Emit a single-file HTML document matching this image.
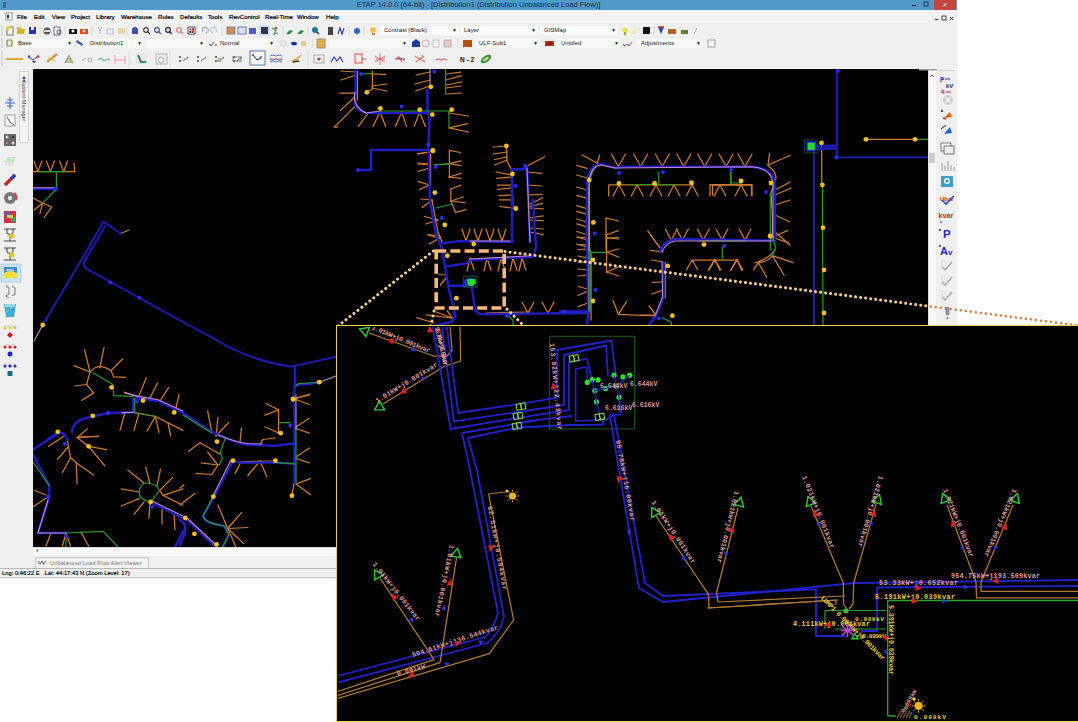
<!DOCTYPE html>
<html><head><meta charset="utf-8">
<style>
*{margin:0;padding:0;box-sizing:border-box}
html,body{width:1078px;height:722px;overflow:hidden;background:#fff;font-family:"Liberation Sans",sans-serif}
.a{position:absolute}
#win{left:0;top:0;width:957px;height:579px;background:#f0f0f0}
#title{left:0;top:0;width:957px;height:10px;background:#4f99cb}
#ttext{left:0;top:0;width:957px;text-align:center;font-size:7.5px;line-height:10px;color:#1c2c3c}
#menu{left:0;top:10px;width:957px;height:13px;font-size:6.1px;line-height:14px;color:#000;background:#f3f3f3;-webkit-text-stroke:0.2px #000}
#menu span{position:absolute;top:0}
.cb{position:absolute;height:9px;background:#fafafa;font-size:6px;line-height:9px;color:#1a1a1a;padding-left:4px}
.cb i{position:absolute;right:2px;top:0;font-style:normal;font-size:5px}
#canvas{left:33px;top:69px;width:895px;height:478px;background:#000}
#vscroll{left:928px;top:69px;width:8px;height:478px;background:#f8f8f8;border-left:1px solid #e4e4e4}
#rtb{left:936px;top:69px;width:21px;height:478px;background:#f0f0f0}
#hscroll{left:33px;top:547px;width:895px;height:9px;background:#f8f8f8;border-top:1px solid #dcdcdc;font-size:6px;line-height:8px;padding-left:2px;color:#333}
#tab{left:35px;top:557px;width:114px;height:11px;border:1px solid #c8c8c8;border-bottom:none;background:#f2f2f2;font-size:5.8px;line-height:10px;color:#7a7a7a;padding-left:14px}
#status{left:0;top:568px;width:957px;height:10px;background:#f0f0f0;border-top:1px solid #b8b8b8;border-bottom:1px solid #c8c8c8;font-size:5.8px;line-height:9px;padding-left:2px;color:#000;-webkit-text-stroke:0.15px #000}
#ltb{left:0;top:69px;width:33px;height:478px;background:#f0f0f0}
#smtab{left:19px;top:71px;width:10px;height:72px;background:#f4f4f4;border:1px solid #d0d0d0}
#smtext{left:24px;top:72px;width:70px;height:8px;font-size:5.5px;line-height:8px;color:#444;transform-origin:0 0;transform:rotate(90deg) translate(8px,-4px);white-space:nowrap}
#inset{left:336px;top:325px;width:742px;height:397px;background:#000;border:1.5px solid #ecd84a;border-right:none}
</style></head><body>
<div id="win" class="a"></div>
<div id="title" class="a"></div>
<div id="ttext" class="a">ETAP 14.0.0 (64-bit) - [Distribution1 (Distribution Unbalanced Load Flow)]</div>
<div class="a" style="left:934px;top:0;width:22px;height:10px;background:#c7473e"></div>
<div id="menu" class="a">
<span style="left:17px">File</span><span style="left:34px">Edit</span><span style="left:52px">View</span><span style="left:71px">Project</span><span style="left:96px">Library</span><span style="left:121px">Warehouse</span><span style="left:158px">Rules</span><span style="left:180px">Defaults</span><span style="left:208px">Tools</span><span style="left:229px">RevControl</span><span style="left:265px">Real-Time</span><span style="left:297px">Window</span><span style="left:326px">Help</span>
</div>
<div class="cb" style="left:14px;top:39px;width:60px">Base<i>&#9660;</i></div>
<div class="cb" style="left:86px;top:39px;width:58px">Distribution1<i>&#9660;</i></div>
<div class="cb" style="left:146px;top:39px;width:60px"><i>&#9660;</i></div>
<div class="cb" style="left:216px;top:39px;width:60px">Normal<i>&#9660;</i></div>
<div class="cb" style="left:329px;top:39px;width:80px"><i>&#9660;</i></div>
<div class="cb" style="left:475px;top:39px;width:65px">ULF-Sub1<i>&#9660;</i></div>
<div class="cb" style="left:557px;top:39px;width:64px">Untitled<i>&#9660;</i></div>
<div class="cb" style="left:637px;top:39px;width:66px">Adjustments<i>&#9660;</i></div>
<div class="cb" style="left:380px;top:26px;width:79px">Contrast (Black)<i>&#9660;</i></div>
<div class="cb" style="left:460px;top:26px;width:78px">Layer<i>&#9660;</i></div>
<div class="cb" style="left:540px;top:26px;width:78px">GISMap<i>&#9660;</i></div>
<div id="ltb" class="a"></div>
<div id="smtab" class="a"></div>
<div id="smtext" class="a">System Manager</div>
<div id="canvas" class="a"></div>
<div id="vscroll" class="a"></div>
<div id="rtb" class="a"></div>
<div id="hscroll" class="a"><span style="font-size:8px;line-height:8px;position:absolute;left:3px;top:-1px;color:#222">&lsaquo;</span></div>
<div id="tab" class="a">Unbalanced Load Flow Alert Viewer</div>
<div id="status" class="a">Lng: 0:46:22 E &nbsp; Lat: 44:17:43 N (Zoom Level: 17)</div>
<svg class="a" style="left:0;top:0" width="1078" height="722" viewBox="0 0 1078 722">
<defs><clipPath id="cv"><rect x="33" y="69" width="895" height="478"/></clipPath></defs>
<g clip-path="url(#cv)" fill="none" stroke-linecap="round" stroke-linejoin="round">
<g stroke="#cc7c30" stroke-width="1.25"><path d="M372.4 71 L372.4 89 L367 92"/><path d="M372 74 L385.6 74.3"/><path d="M372 86 L387 84"/><path d="M372 88 L387 91"/><path d="M356 72 L341 71"/><path d="M356 75 L341 80"/><path d="M356 93 L339.7 93"/><path d="M356 96 L340.4 110.4"/><path d="M355.7 105.6 L334.2 127.1 L337.5 127.1"/><path d="M367.6 114 L358.5 126.4"/><path d="M380 112 L373 126.4"/><path d="M380 112 L385.7 126.4"/><path d="M401.7 112 L395.4 126.4"/><path d="M401.7 112 L406.5 126.4"/><path d="M419.7 112 L414.2 126.4"/><path d="M419.7 112 L425.3 126.4"/><path d="M430 72 L416 75"/><path d="M430 80 L415 84"/><path d="M430 86 L415.6 91"/><path d="M446 74 L460.8 72.2"/><path d="M446 80 L461.5 75.6"/><path d="M446 85 L461.5 82"/><path d="M446 88 L460.8 86"/><path d="M446 94 L461.5 93"/><path d="M449 113 L468.4 116"/><path d="M449 127.8 L467.7 123.7"/><path d="M449 127.8 L468.4 132"/><path d="M430 152 L417.7 153.6"/><path d="M430 165 L417.7 164"/><path d="M430.6 154 L430.6 185"/><path d="M449.4 150.4 L449.4 177"/><path d="M449.4 150.4 L460.5 152.5"/><path d="M449 163.7 L461 160.9"/><path d="M449 163.7 L461 165.7"/><path d="M449 177 L461 173.4"/><path d="M449 177 L461 178.3"/><path d="M450.8 188.7 L450.8 201.2 L455.7 212.4"/><path d="M451 189 L461 185.2"/><path d="M451 201 L463.3 197"/><path d="M451 201 L464.7 202.6"/><path d="M455.7 212.4 L466 209.6"/><path d="M430 152 L418 154"/><path d="M430 164 L418 163"/><path d="M430 168 L418 171.3"/><path d="M430 185 L418 181.7"/><path d="M430 185 L419.5 189.4"/><path d="M432 200 L420.9 199"/><path d="M432 200 L422.3 207.5"/><path d="M438 220 L424.3 216.5"/><path d="M438 220 L425.7 224"/><path d="M440 236 L427.8 234.6"/><path d="M466 241 L462 229 M466 241 L470 229"/><path d="M478 241 L474 229 M478 241 L482 229"/><path d="M490 241 L486 229 M490 241 L494 229"/><path d="M502 241 L498 229 M502 241 L506 229"/><path d="M506.4 145.8 L507 161 L511.3 169.2"/><path d="M512 175 L513 208"/><path d="M507 146 L493 147"/><path d="M507 152 L493 154"/><path d="M507 157 L494.6 159.5"/><path d="M507 160 L494.6 165"/><path d="M512 175 L496 172"/><path d="M512 177 L496.7 178.3"/><path d="M512 185 L497.4 185.2"/><path d="M512 188 L498 189.4"/><path d="M512 195 L498.8 195.7"/><path d="M512 200 L499.5 199.8"/><path d="M512 208 L500.2 206.5"/><path d="M527 166 L544.7 156.7"/><path d="M527 172 L541.9 173.4"/><path d="M527 185 L541.9 186"/><path d="M527 195 L541.9 194.3"/><path d="M528 205 L542.6 197.7"/><path d="M528 207 L542.6 203.3"/><path d="M529 208 L543.3 208.9"/><path d="M529 218 L543.3 215.8"/><path d="M529 220 L543.3 220.7"/><path d="M530 228 L543.3 229"/><path d="M530 232 L543.3 234.6"/><path d="M582 155 L599 164 M599.7 155 L597 164"/><path d="M618.4 166.5 L611.4 154 M618.4 166.5 L625.4 154"/><path d="M640.7 166.5 L633.7 154 M640.7 166.5 L647.7 154"/><path d="M662.3 166.5 L655.3 154 M662.3 166.5 L669.3 154"/><path d="M683.8 166.5 L676.8 154 M683.8 166.5 L690.8 154"/><path d="M704.7 166.5 L697.7 154 M704.7 166.5 L711.7 154"/><path d="M726 166.5 L719 154 M726 166.5 L733 154"/><path d="M745 166.5 L738 154 M745 166.5 L752 154"/><path d="M608.7 196 L608.7 184.8 L693 184.8"/><path d="M710 184.5 L752 184.5 M710 184.5 L710 196 M752 184.5 L752 196"/><path d="M619 184.8 L613 196 M619 184.8 L625 196"/><path d="M637.2 184.8 L631.2 196 M637.2 184.8 L643.2 196"/><path d="M656 184.8 L650 196 M656 184.8 L662 196"/><path d="M674 184.8 L668 196 M674 184.8 L680 196"/><path d="M692.2 184.8 L686.2 196 M692.2 184.8 L698.2 196"/><path d="M720 184.8 L714 196 M720 184.8 L726 196"/><path d="M741 184.8 L735 196 M741 184.8 L747 196"/><path d="M587 168.4 L576.7 165.4"/><path d="M587 178 L576.7 175"/><path d="M587 190 L576.7 187"/><path d="M587 198.3 L576.7 195.3"/><path d="M587 208.7 L576.7 205.7"/><path d="M587 214.3 L576.7 211.3"/><path d="M587 222 L576.7 219"/><path d="M587 226.8 L576.7 223.8"/><path d="M587 234.5 L576.7 231.5"/><path d="M587 240 L576.7 237"/><path d="M587 247 L576.7 244"/><path d="M606 218.2 L606 250"/><path d="M606 218 L618.4 221"/><path d="M606 235 L618.4 230.7"/><path d="M606 238 L618.4 237.7"/><path d="M671.3 240 L665.3 229 M671.3 240 L677.3 229"/><path d="M682.4 240 L676.4 229 M682.4 240 L688.4 229"/><path d="M703.3 240 L697.3 229 M703.3 240 L709.3 229"/><path d="M722 240 L716 229 M722 240 L728 229"/><path d="M745 240 L739 229 M745 240 L751 229"/><path d="M660 248 L647.7 230.7"/><path d="M775 190 L790 182"/><path d="M775 205 L790 200"/><path d="M775 215 L790 222"/><path d="M775 232 L790 245"/><path d="M775 195 L791 188"/><path d="M712.5 195 L712.5 185.2 L751.5 185.2 L751.5 195"/><path d="M768 165.7 Q777 172 775.8 179 L771 193 L772.4 215 L772.4 240"/><path d="M768 165 L769.6 153.2"/><path d="M768 165 L790.4 155.3"/><path d="M821.7 142.8 L821.7 184.5"/><path d="M866 139.3 L915 139.3"/><path d="M606.6 235 L606.6 272.6"/><path d="M606.6 238 L619 239"/><path d="M606.6 252 L619 249"/><path d="M606.6 252 L619 257.3"/><path d="M606.6 272 L618.4 267"/><path d="M606.6 272 L619 276"/><path d="M588 238 L578 237"/><path d="M588 245 L578 244.7"/><path d="M588 249 L578 249.6"/><path d="M588 258 L578 256"/><path d="M588 262 L578 262"/><path d="M588 270 L578 269"/><path d="M588 275 L578 276"/><path d="M588 289 L578 286.5"/><path d="M588 291 L578 295.5"/><path d="M588 303 L578 306.7"/><path d="M656 316 L618.4 314.3 L613 300.4 M618.4 314.3 L626.8 301"/><path d="M663 252 L650.4 250.3"/><path d="M663 262 L651.8 260"/><path d="M663 282 L652.5 282.3"/><path d="M663 290 L651.8 294"/><path d="M656 315 L649 306"/><path d="M656 315 L640 315"/><path d="M660 248 L650.4 235"/><path d="M692.2 260 L737 260 M692.2 260 L686.6 269.8 M692.2 260 L697.7 269.8 M715 260 L709 270 M715 260 L721 270 M737 260 L731 270 M737 260 L743 270"/><path d="M755 263 Q770 258 775 250"/><path d="M714.6 259.2 L708.3 270.4 M714.6 259.2 L720 270.4 M737 259.2 L730.6 270.4 M737 259.2 L741.7 270.4"/><path d="M772.4 255.7 Q768 262 758.4 262.7 M772.4 255.7 L793.2 262.7 M772.4 255.7 L784.2 275.2 M758.4 262.7 L753.6 269.7 M758.4 262.7 L766.8 277.3 M772 237 L787.7 230.7 M772 237 L789 243.2"/><path d="M33 171.6 L74.7 171.6 L74 163.2"/><path d="M37.9 171.6 L33.9 161 M37.9 171.6 L41.9 161"/><path d="M50.4 171.6 L46.4 161 M50.4 171.6 L54.4 161"/><path d="M63.6 171.6 L59.6 161 M63.6 171.6 L67.6 161"/><path d="M42.7 203 L33 198 M42.7 203 L34.4 209.8 M42.7 203 L40 213.3 M42.7 203 L51.8 207 L44.1 217.5"/><path d="M120.7 233.5 L129 230"/><path d="M293 399 L310 394"/><path d="M90 372 Q98 362 111 370.6 L113.7 376.9 L125.5 377.3"/><path d="M90 372 L84.5 349.7"/><path d="M99.8 367.8 L104 347.7"/><path d="M111 370.6 L122.7 358.8"/><path d="M90 372 L74 365.7"/><path d="M90 372 L86.6 384.5 L74.7 386"/><path d="M86.6 384.5 L93.5 392.9 L81.7 400.5"/><path d="M133 412.4 L155.4 416.5 L183 430.4"/><path d="M124.8 413 L120 430.4"/><path d="M138.7 414 L134 430.4"/><path d="M155.4 416.5 L147 431"/><path d="M155.4 416.5 L159 432.5"/><path d="M168 423 L170.7 436"/><path d="M138.7 396.4 L146.4 377.6"/><path d="M150 398 L157.5 383"/><path d="M160 401 L168.7 387.3"/><path d="M176 408 L179 394.3"/><path d="M124 392 L138 397"/><path d="M77.5 437.4 L87.3 429 M77.5 437.4 L98.4 436"/><path d="M67.3 439.8 L70.6 457.8 L76.3 462.7 L93.5 475"/><path d="M70.6 457.8 L62.4 472.5"/><path d="M76.3 462.7 L77 484"/><path d="M69 446 L57.5 459.4"/><path d="M65.7 435 L48.5 446.3"/><path d="M77 437.4 L88.6 446.3 L104.9 466 M77 437.4 L98.4 436.5 M88.6 446.3 L106.5 449.6"/><path d="M139 492 L121.2 488.8"/><path d="M139.2 498.6 L121.2 506"/><path d="M144 502 L134.3 514"/><path d="M150 502 L149 518.2"/><path d="M144 483 L127.8 470"/><path d="M150 484 L145.7 466.8"/><path d="M157 486 L160.5 469.2"/><path d="M159.6 490.5 L172.7 477.4"/><path d="M159.6 490.5 L163 495.4 L183 505.2"/><path d="M163 495.4 L183 488.8"/><path d="M162 508 L162 524"/><path d="M174 513.5 L175 529.7"/><path d="M47.7 497 L33 506.8"/><path d="M46 495 L34.6 490.5"/><path d="M51 533 L46 546"/><path d="M66 533 L62.4 546"/><path d="M66 533 L70.6 546"/><path d="M81 532 L88.6 546"/><path d="M242 461.5 L275.4 461"/><path d="M278.6 409.8 L278.6 433.2 M278.6 409.8 L265.8 403.5 M278.6 409.8 L264.8 415.1 M278.6 433 L264.8 426.8"/><path d="M294.5 399 L309.3 395"/><path d="M294.5 399 L309.3 404.5"/><path d="M294.5 428 L309.3 418.3"/><path d="M294.5 428 L309.3 433.2"/><path d="M294.5 458 L309.3 448"/><path d="M294.5 458 L309.3 462.8"/><path d="M296 484 L310.4 478.7"/><path d="M296 484 L310.4 494.6"/><path d="M294 483 L291.9 495.7"/><path d="M211.8 432 L207.6 410.9"/><path d="M216 436 L218 417.3"/><path d="M216 436 L228.7 422.6"/><path d="M240 442 L241.5 427.9"/><path d="M260 445 L262.7 439.5 L275 438"/><path d="M200 442.7 L188.5 451.2"/><path d="M200 442.7 L220.3 454.3"/><path d="M218 465 L207.6 452.2"/><path d="M218 465 L201.2 462.8"/><path d="M218 465 L211.8 474.5 L195.9 473.4"/><path d="M241 462 L235.1 473.4"/><path d="M260 461 L247.8 475.5"/><path d="M260 461 L266.9 476.6"/><path d="M227.7 528.5 L218 505.2"/><path d="M227.7 528.5 L241.5 512.6"/><path d="M227.7 528.5 L247.8 527.5"/><path d="M227.7 528.5 L243.6 543.4"/><path d="M227.7 528.5 L236 547"/><path d="M180 505 L194.8 493.6"/><path d="M180 488 L184 485"/><path d="M440 238 L427.8 234.9"/><path d="M440 238 L429.2 244"/><path d="M446 275 L439 274.5"/><path d="M446 278 L440.4 285"/><path d="M452 318 L436.2 312"/><path d="M452 318 L447.3 310.7"/><path d="M452 318 L426.4 314.9"/><path d="M434 323 L416.7 317.7"/><path d="M470 258 L467 271 M470 258 L474 270"/><path d="M487 258 L484 271 M487 258 L491 270"/><path d="M501 258 L498 271 M501 258 L505 270"/><path d="M513 258 L510 271 M513 258 L517 270"/><path d="M522 258 L519 271 M522 258 L526 270"/><path d="M528 313 L522 302 M528 313 L534 302"/><path d="M548 313 L542 302 M548 313 L554 302"/><path d="M486 313 L530 312"/><path d="M357.5 71 L357.5 100"/><path d="M591 252 L591 320"/><path d="M599 164 Q590 168 589.5 182 L589.5 250"/><path d="M432 200 L438 232 L442 242"/></g>
<g stroke="#1e1ec4" stroke-width="2.4"><path d="M355.7 69 L355.7 94 Q353 104 358 109 Q362 113 370 113 L429 113"/><path d="M427.4 90 L427.4 111 L429.5 120 L428.5 145 L430 200 L436 235 L440 243"/><path d="M371 170 L371 150 L429 150"/><path d="M371 170 L358 170"/><path d="M512 169 L512 242"/><path d="M512 169.2 L525.2 169.2 L526.6 166"/><path d="M527 166 L530 242"/><path d="M587 250 L587 184 Q588 166 601 164 L615.7 168 L621.2 166.7 L752 166.7 Q772 168 775 182 L775 238"/><path d="M660 252 Q664 240 676 239 L775 240.6"/><path d="M816 145.6 L836.4 145.6 M816 148.5 L836.4 148.5"/><path d="M587 250 L588.5 311.5 L587 326"/><path d="M560 311.5 L587 311.5"/><path d="M663.7 262.8 L663.7 297.6 L656 315.7 L649 325"/><path d="M33 188.7 L56.4 188.7"/><path d="M295 366.6 L295 386.8 Q296 384 303 384.5 L319 382.5"/><path d="M136 398 L158.2 401 L183 413"/><path d="M133.2 398.4 L133.2 412.4"/><path d="M72 432 Q72 420 92.8 416.5 L108 413 L133.2 412.4"/><path d="M46.9 440 L57.8 432.5 Q63 432 65 436 L67.8 440"/><path d="M33 449.6 L55.9 434.9"/><path d="M33 454.5 L49.3 485.6 L49.3 497 L37.9 533"/><path d="M37.9 533 L65.7 533"/><path d="M150.6 502 L183 518.2"/><path d="M183 531.3 L175.2 547"/><path d="M183 413 L211.8 432.1 L222.4 436.3 Q235 443 247.8 444.8 L275.4 445.9 L294.5 443.3"/><path d="M294.5 386 L294.5 483"/><path d="M233 460.7 L241.5 462.8 L275.4 462.4 L294.5 463.9"/><path d="M233 460.7 L214 496.7 L203.3 515.8 Q204 522 215 524 L224.5 526.4 L228.7 534.9 L222.4 548"/><path d="M185.3 518 L214 545.5"/><path d="M180 520 Q188 525 184 535 L180 545"/><path d="M440 243 L441.7 248 L446 271.7 L448.7 288.4 L452.9 305 L455.7 316.3 L451.5 321.8 L433.4 326"/><path d="M448.7 285.7 L466.8 285.7 L471 282.2"/><path d="M447.3 266.2 L466.8 263.4 L469.6 260 L533 256.8 L536 248 L533 200"/><path d="M443 243.2 L458.4 241.1 L513 242"/><path d="M472 288 L475 309.3 Q477 314 482 314.2 L589 313"/></g>
<g stroke="#1c1cb8" stroke-width="1.9"><path d="M814 152 L814 330"/><path d="M837 69 L837 157.4 L928 157.4"/><path d="M120.7 233.5 L103.3 221.7 L87.3 250 L42.7 325"/><path d="M105.3 225.8 L97 240 L84 262 Q83 267 88 269.5 L183 322 L212 337.5 Q250 361 291.6 366.6 L336 356.7"/></g>
<g stroke="#2a9a2a" stroke-width="1.2"><path d="M361 74 L372 73.6"/><path d="M381 111 L450 111"/><path d="M445.5 69 L445.5 94"/><path d="M449 111 L449 128"/><path d="M434.4 164.7 L449.7 164"/><path d="M436 165 L448.7 163.7"/><path d="M436 208 L452.9 204"/><path d="M589 250 L589 186 Q591 170 597 166"/><path d="M630 184.5 L677 184.5"/><path d="M658.8 172 L658.8 183.4"/><path d="M731 172 L731 184"/><path d="M770.3 193 L770.3 250"/><path d="M730.6 172 L730.6 183 L741.7 183"/><path d="M822.4 184.5 L823 330"/><path d="M915 139.3 L928 139.3"/><path d="M590.6 250 L590.6 311.5"/><path d="M590.6 252.4 L606 252.4"/><path d="M665.5 262 L665.5 298"/><path d="M662.3 317.8 L671.3 322 L671.3 326"/><path d="M700 241 L745 241"/><path d="M722.3 246.7 L722.3 259.2"/><path d="M772.4 237 L775.8 248 L772.4 255.7"/><path d="M40 171.6 L64 171.6 M56.4 171.6 L56.4 187.6 M56.4 189 L42.7 202.9"/><path d="M296 386 Q297 383 303 383.5 L319 382"/><path d="M92.8 372.7 L113 384.5 L113.7 395.7 L133.2 396.4"/><path d="M134.5 398.4 L134.5 412.4"/><path d="M134 412.5 L155 416"/><path d="M33 462 L49.3 485.6"/><path d="M65.7 533 L103.3 531.3 L118 547"/><path d="M150.6 502 Q139 500 139.2 492 Q140 483 147 483 Q157 484 159.6 490.5 L150.6 502"/><path d="M66 533 L66 547"/><path d="M183 415 L211.8 433"/><path d="M296 428.9 L296 483"/><path d="M275.4 462.4 L294.5 463.9"/><path d="M213 497 L203 516 Q205 523 224.5 526 L228.7 535 L222 548"/><path d="M279.6 422.6 L290.2 422.6"/><path d="M225.6 437.4 L220.3 452.2 L222.4 458.6 L219.2 465"/><path d="M508 316 L513 320 L513 326"/></g>
<g stroke="#c888c8" stroke-width="1.1"><path d="M355 92 Q352 106 366 113 L380 111"/><path d="M430 69 L430 87"/><path d="M527 168 L530 242"/><path d="M589 250 L589 184 Q590 166 601 165 L615 168 L752 166.7 Q770 168 773 182 L773 238"/><path d="M662 252 Q666 242 676 241 L772 241"/><path d="M589 250 L589 311"/><path d="M662 262 L662.5 297 L655 316"/><path d="M33 187.7 L54 187.7"/><path d="M42.7 325 L34 341"/><path d="M319 382.5 L336 376"/><path d="M124.8 392.9 L138.7 396.4 L158.2 399.8 L183 411"/><path d="M122 412.6 L133 412.4"/><path d="M48 500 L37.9 533 L65.7 533"/><path d="M152 501 L183 516"/><path d="M218 435 Q235 442 247.8 443.5 L262 444"/><path d="M296 395 L296 428.9"/><path d="M231 460 L213 496"/><path d="M187 518 L215 544"/><path d="M469.6 259 L530 255.8"/><path d="M470 241 L510 241"/></g>
<g fill="#2a2af0" stroke="none"><circle cx="361" cy="74" r="2"/><circle cx="434.4" cy="71.5" r="2"/><circle cx="401.7" cy="106.5" r="2"/><circle cx="428" cy="144.5" r="2"/><circle cx="358" cy="170" r="2"/><circle cx="435.5" cy="167" r="2"/><circle cx="441.7" cy="218" r="2"/><circle cx="525" cy="166" r="2"/><circle cx="515.5" cy="186" r="2"/><circle cx="619" cy="173" r="2"/><circle cx="663" cy="172.3" r="2"/><circle cx="594.8" cy="233.5" r="2"/><circle cx="731" cy="170" r="2"/><circle cx="766" cy="192" r="2"/><circle cx="838" cy="71" r="2"/><circle cx="836.4" cy="157.4" r="2"/><circle cx="564" cy="311.5" r="2"/><circle cx="595.5" cy="290" r="2"/><circle cx="658.8" cy="318.5" r="2"/><circle cx="724.3" cy="246" r="2"/><circle cx="56.4" cy="189" r="2"/><circle cx="110.2" cy="282.4" r="2"/><circle cx="139.4" cy="297.7" r="2"/><circle cx="108" cy="413" r="2"/><circle cx="136.7" cy="401.2" r="2"/><circle cx="47.7" cy="497" r="2"/><circle cx="66.5" cy="536.2" r="2"/><circle cx="64.9" cy="444" r="2"/><circle cx="152.3" cy="506.8" r="2"/><circle cx="290.2" cy="425.7" r="2"/><circle cx="507" cy="316" r="2"/></g>
<g fill="#f4c020" stroke="none"><circle cx="380.4" cy="108.4" r="2.4"/><circle cx="419.7" cy="109.7" r="2.4"/><circle cx="366.9" cy="92.3" r="2.4"/><circle cx="430.9" cy="86.8" r="2.4"/><circle cx="432.3" cy="114.6" r="2.4"/><circle cx="451.7" cy="109.7" r="2.4"/><circle cx="433" cy="150.8" r="2.4"/><circle cx="432.7" cy="150.4" r="2.4"/><circle cx="434.8" cy="192.6" r="2.4"/><circle cx="444.8" cy="224.9" r="2.4"/><circle cx="506.4" cy="145.8" r="2.4"/><circle cx="512.4" cy="174" r="2.4"/><circle cx="515.8" cy="208.5" r="2.4"/><circle cx="619" cy="183.4" r="2.4"/><circle cx="654.6" cy="183.4" r="2.4"/><circle cx="691.5" cy="182.7" r="2.4"/><circle cx="589.2" cy="180" r="2.4"/><circle cx="593.4" cy="222.4" r="2.4"/><circle cx="704" cy="244.6" r="2.4"/><circle cx="741" cy="181" r="2.4"/><circle cx="771" cy="183" r="2.4"/><circle cx="770" cy="236" r="2.4"/><circle cx="821.5" cy="142.8" r="2.4"/><circle cx="822.4" cy="184.8" r="2.4"/><circle cx="823" cy="227.7" r="2.4"/><circle cx="824" cy="270" r="2.4"/><circle cx="824" cy="313" r="2.4"/><circle cx="866" cy="139.3" r="2.4"/><circle cx="915" cy="139.3" r="2.4"/><circle cx="593" cy="259.8" r="2.4"/><circle cx="593" cy="301" r="2.4"/><circle cx="667.8" cy="265.9" r="2.4"/><circle cx="672.4" cy="315.7" r="2.4"/><circle cx="42.7" cy="325" r="2.4"/><circle cx="319.2" cy="382.2" r="2.4"/><circle cx="292.9" cy="399" r="2.4"/><circle cx="111.6" cy="387.3" r="2.4"/><circle cx="143" cy="400.5" r="2.4"/><circle cx="92.8" cy="415.8" r="2.4"/><circle cx="57.8" cy="431.8" r="2.4"/><circle cx="174.2" cy="412.4" r="2.4"/><circle cx="88.6" cy="446.3" r="2.4"/><circle cx="150.6" cy="502" r="2.4"/><circle cx="293.4" cy="399.2" r="2.4"/><circle cx="280.7" cy="433.2" r="2.4"/><circle cx="217" cy="441.6" r="2.4"/><circle cx="233" cy="460.7" r="2.4"/><circle cx="275.4" cy="460.7" r="2.4"/><circle cx="291.9" cy="495.7" r="2.4"/><circle cx="213.3" cy="496.7" r="2.4"/><circle cx="185.3" cy="518" r="2.4"/><circle cx="194.4" cy="533.8" r="2.4"/><circle cx="216.5" cy="544.4" r="2.4"/><circle cx="447.3" cy="255.7" r="2.4"/><circle cx="456.4" cy="298.2" r="2.4"/><circle cx="473.7" cy="244" r="2.4"/></g>
<rect x="804.8" y="139.8" width="13" height="13" fill="none" stroke="#1a5a1a" stroke-width="0.8"/><rect x="806.3" y="141.3" width="10" height="10" fill="#2a2ae0"/><rect x="807.8" y="142.8" width="7" height="7" fill="#20e020"/>
<rect x="464" y="276.2" width="13" height="11" fill="none" stroke="#1a6a1a" stroke-width="0.8"/><ellipse cx="470" cy="282.2" rx="6" ry="4.5" fill="#2a2ae0"/><path d="M467 279.2 L475 278.7 L476 283.2 L472 286.2 L468 285.2z" fill="#20e020"/>
</g>
<g fill="none" stroke="#f8b878" stroke-width="3.6" stroke-dasharray="10 4.2"><rect x="436.2" y="251" width="68" height="57"/></g>
<g fill="none" stroke="#f4c994" stroke-width="3" stroke-linecap="round" stroke-dasharray="0.1 4.95">
<path d="M433.4 251 L338 326"/><path d="M434 311 L431 326"/><path d="M507 309 L524 326"/>
</g>
<defs><clipPath id="dk"><rect x="0" y="0" width="928" height="326"/></clipPath><clipPath id="wt"><rect x="928" y="0" width="200" height="326"/></clipPath></defs>
<path d="M505 251.5 L1078 325.5" fill="none" stroke="#f4c994" stroke-width="3" stroke-linecap="round" stroke-dasharray="0.1 4.95" clip-path="url(#dk)"/>
<path d="M505 251.5 L1078 325.5" fill="none" stroke="#cc8448" stroke-width="2.6" stroke-linecap="round" stroke-dasharray="0.1 4.95" clip-path="url(#wt)"/>
<rect x="7" y="27" width="6" height="8" fill="#fff8d0" stroke="#556" stroke-width="0.8"/>
<circle cx="8" cy="28" r="2" fill="#f0d040"/>
<path d="M17 29h8l-1 5h-7z" fill="#d8b030"/><rect x="17" y="27" width="4" height="2" fill="#e8c040"/>
<rect x="29" y="27" width="7" height="7" fill="#2838a8"/><rect x="31" y="27" width="3" height="3" fill="#fff"/>
<circle cx="47" cy="31" r="3.5" fill="#555"/><rect x="44" y="30" width="6" height="2" fill="#ddd"/>
<rect x="54" y="27" width="6" height="8" fill="#eef" stroke="#556" stroke-width="0.8"/>
<circle cx="59" cy="32" r="2" fill="none" stroke="#334" stroke-width="0.8"/>
<path d="M69 29h8v5h-8z" fill="#111"/><circle cx="73" cy="31" r="1.5" fill="#fff"/>
<path d="M80 29h8v5h-8z" fill="#e04a10"/><circle cx="84" cy="31" r="1.5" fill="#fdd"/>
<path d="M98 27l2 4 2-4M100 31v3" stroke="#aab" stroke-width="0.8" fill="none"/>
<rect x="107" y="29" width="6" height="5" fill="none" stroke="#aac" stroke-width="0.8"/>
<rect x="118" y="28" width="7" height="6" fill="#e8d8a0"/>
<path d="M132 34v-4a3 3 0 0 1 6 0v4z" fill="#4050b0"/>
<circle cx="146" cy="30" r="2.3" fill="none" stroke="#444" stroke-width="1.2"/><path d="M147.5 31.5l2.5 2.5" stroke="#444" stroke-width="1.3"/>
<circle cx="157" cy="30" r="2.3" fill="none" stroke="#3a5a8a" stroke-width="1.2"/><path d="M158.5 31.5l2.5 2.5" stroke="#3a5a8a" stroke-width="1.3"/>
<circle cx="168" cy="30" r="2.3" fill="none" stroke="#223" stroke-width="1.2"/><path d="M169.5 31.5l2.5 2.5" stroke="#223" stroke-width="1.3"/>
<circle cx="179" cy="30" r="2.3" fill="none" stroke="#e08080" stroke-width="1.2"/><path d="M180.5 31.5l2.5 2.5" stroke="#e08080" stroke-width="1.3"/>
<rect x="188" y="27" width="7" height="7" fill="#fff" stroke="#223" stroke-width="0.8"/><rect x="189.5" y="28.5" width="1.8" height="1.8" fill="#c00"/><rect x="192" y="31" width="1.8" height="1.8" fill="#c00"/><rect x="189.5" y="31" width="1.8" height="1.8" fill="#000"/><rect x="192" y="28.5" width="1.8" height="1.8" fill="#000"/>
<path d="M203 32a3 3 0 1 1 3 1" stroke="#7a9ad0" stroke-width="1" fill="none"/><path d="M216 32a3 3 0 1 0 -3 1" stroke="#9ac0e8" stroke-width="1" fill="none"/>
<rect x="227" y="27" width="8" height="7" fill="#d89050" stroke="#6670a0" stroke-width="0.8"/>
<rect x="238" y="27" width="8" height="7" fill="#e0e0f0" stroke="#5060a0" stroke-width="0.8"/>
<rect x="249" y="28" width="7" height="6" fill="#5060c0"/>
<rect x="259" y="25" width="11" height="11" fill="#cde4f5"/><rect x="261" y="27" width="7" height="7" fill="#335"/>
<path d="M272 28l4 2 -2 4 4 -1" stroke="#30b040" stroke-width="1.2" fill="none"/><circle cx="276" cy="28" r="1.3" fill="#e03030"/>
<path d="M286 34l4-4 3 1 -3 3z" fill="#2a9040"/><path d="M297 34l4-4 3 1 -3 3z" fill="#2a9040"/>
<circle cx="315" cy="30" r="3" fill="#1a7a90"/><path d="M317 32l2 2" stroke="#123" stroke-width="1.4"/>
<rect x="328" y="27" width="5" height="8" fill="#444"/><path d="M338 34l2-6 2 6 2-6" stroke="#2848a0" stroke-width="1.2" fill="none"/>
<circle cx="357" cy="31" r="3" fill="#2a68c8"/>
<circle cx="373" cy="30" r="2.8" fill="#f0c040"/><rect x="372" y="33" width="3" height="2" fill="#c09030"/>
<circle cx="625" cy="30" r="2.5" fill="#f0e040"/><rect x="624" y="32" width="2" height="3" fill="#c0a020"/>
<rect x="632" y="30" width="4" height="4" fill="#f5e8b0"/><rect x="643" y="27" width="7" height="7" fill="#111"/>
<path d="M658 27h6l-3 7z" fill="#3040b0"/><path d="M658 27h6" stroke="#d03030" stroke-width="1.5"/>
<rect x="668" y="29" width="8" height="5" fill="#b06020"/><rect x="681" y="30" width="7" height="4" fill="#608030"/><path d="M694 34l3-6" stroke="#999" stroke-width="0.8"/>
<rect x="7" y="40" width="5" height="6" rx="1" fill="none" stroke="#7a9a30" stroke-width="1.2"/>
<path d="M77 40l6 4 -1 2 -6 -4z" fill="#3a5aa8"/>
<path d="M209 44l2 2 3-4" stroke="#c03030" stroke-width="1" fill="none"/><circle cx="216" cy="45" r="0.8" fill="#222"/>
<rect x="281" y="41" width="5" height="5" fill="none" stroke="#ccc" stroke-width="0.8"/><ellipse cx="294" cy="43.5" rx="3" ry="1.8" fill="#1a2aa0"/><rect x="301" y="41" width="5" height="5" fill="#e0d090"/>
<rect x="317" y="39" width="8" height="9" fill="#d8b050" stroke="#a08060" stroke-width="0.8"/>
<path d="M412 47v-5l4-3 4 3v5z" fill="#1a3aa0"/><circle cx="426" cy="43.5" r="3.5" fill="none" stroke="#e0a0a0" stroke-width="0.9"/><rect x="433" y="40" width="6" height="7" fill="none" stroke="#bbb" stroke-width="0.8"/><rect x="444" y="40" width="7" height="7" fill="#e8c8c8" stroke="#999" stroke-width="0.6"/>
<rect x="463" y="40" width="9" height="7" fill="#b85010"/><rect x="545" y="41" width="9" height="5" fill="#c02810"/><path d="M547 42l5 3M552 42l-5 3" stroke="#222" stroke-width="0.8"/>
<path d="M623 44l2 2 2-2 2 2" stroke="#3050b0" stroke-width="0.9" fill="none"/><path d="M629 46l3-4" stroke="#d03030" stroke-width="0.9"/>
<rect x="708" y="40" width="7" height="7" fill="#fafafa" stroke="#777" stroke-width="0.7"/>
<rect x="6" y="58" width="17" height="2" fill="#d8b030"/>
<path d="M29 57l4 3 4-3" stroke="#3a3a80" stroke-width="1" fill="none"/><circle cx="29" cy="56.5" r="1.3" fill="#3050c0"/><circle cx="38" cy="56.5" r="1.3" fill="#d03040"/><path d="M32 61l2 2 2-2z" fill="#111"/>
<path d="M47 62l10-8" stroke="#e08820" stroke-width="2.2"/><path d="M48 57l8 4" stroke="#f0c040" stroke-width="1"/>
<path d="M64 63l5-9 5 9z" fill="#aaa"/><circle cx="69" cy="61" r="1.6" fill="#c8e040"/>
<path d="M82 61l4-3" stroke="#aaa" stroke-width="0.9"/><circle cx="90" cy="60" r="2" fill="none" stroke="#aaa" stroke-width="1"/>
<path d="M98 60l3-2 3 3 3-2 3 1" stroke="#40b090" stroke-width="1" fill="none"/>
<path d="M115 55v9M115 60h10M125 56v8" stroke="#e890b0" stroke-width="0.9" fill="none"/>
<rect x="136" y="53" width="11" height="11" fill="#e8e8e8"/><path d="M138 55l3 7h5" stroke="#20a070" stroke-width="2" fill="none"/><path d="M139 57l2 5" stroke="#c03050" stroke-width="1"/>
<rect x="156" y="54" width="11" height="10" fill="none" stroke="#aaa" stroke-width="0.9"/><circle cx="161" cy="60" r="3" fill="none" stroke="#aaa" stroke-width="0.8"/>
<circle cx="180" cy="57" r="0.9" fill="#333"/><circle cx="180" cy="61" r="0.9" fill="#333"/><path d="M183 61l5-4" stroke="#555" stroke-width="0.9"/>
<circle cx="198" cy="57" r="0.9" fill="#333"/><circle cx="198" cy="61" r="0.9" fill="#333"/><path d="M201 61l5-4" stroke="#555" stroke-width="0.9"/>
<circle cx="216" cy="57" r="0.9" fill="#333"/><circle cx="216" cy="61" r="0.9" fill="#333"/><path d="M219 61l5-4" stroke="#555" stroke-width="0.9"/>
<circle cx="234" cy="57" r="0.9" fill="#333"/><circle cx="234" cy="61" r="0.9" fill="#333"/><path d="M237 61l5-4" stroke="#555" stroke-width="0.9"/>
<path d="M216 62l3-5 3 5z" fill="#b0b090"/><rect x="233" y="57" width="8" height="4" fill="none" stroke="#666" stroke-width="0.8"/>
<rect x="250" y="51" width="15" height="14" fill="#f4f8fc" stroke="#5a7aa0" stroke-width="1"/><path d="M253 55l4 5 4-2" stroke="#223" stroke-width="1" fill="none"/><circle cx="253" cy="55" r="1" fill="#3050c0"/><circle cx="261" cy="57" r="1" fill="#c03030"/>
<path d="M270 56l3-1 3 1 3-1 3 1M270 59l3 1 3-1 3 1 3-1M270 62l3-1 3 1 3-1 3 1" stroke="#3060c0" stroke-width="0.8" fill="none"/><path d="M270 59l12 0" stroke="#d04040" stroke-width="0.6"/>
<path d="M292 61l5-2 4-4" stroke="#e0a030" stroke-width="1.5" fill="none"/><path d="M293 62l6-1" stroke="#333" stroke-width="1.3"/>
<rect x="314" y="55" width="10" height="8" fill="none" stroke="#999" stroke-width="0.8"/><path d="M317 58l2 3 2-3z" fill="#c03030"/>
<path d="M331 62l3-5 3 4 3-4 3 5" stroke="#2040c0" stroke-width="1.2" fill="none"/><path d="M337 61l3-4" stroke="#d03040" stroke-width="1"/>
<rect x="355" y="54" width="7" height="9" fill="none" stroke="#e04040" stroke-width="1"/><path d="M362 59h4" stroke="#e04040" stroke-width="1"/>
<path d="M380 53v12M375 56l10 6M375 62l10-6M376 59h9" stroke="#e05050" stroke-width="0.8"/>
<path d="M395 59l5-1 5 2M398 56l4 6" stroke="#d03040" stroke-width="0.9" fill="none"/><path d="M396 59h8" stroke="#444" stroke-width="0.6"/>
<path d="M415 56l4 3 5-3M416 62l4-3 5 3" stroke="#e05040" stroke-width="1" fill="none"/><path d="M422 55l2 3" stroke="#e0a020" stroke-width="1.3"/>
<path d="M436 60l3-1 2 1 3-1 3 1" stroke="#d03040" stroke-width="0.8" fill="none"/>
<text x="460" y="62" font-size="6.5" font-weight="bold" fill="#111">N - 2</text>
<ellipse cx="486" cy="59" rx="6" ry="3" fill="#2a9a40" transform="rotate(-35 486 59)"/><ellipse cx="486" cy="59" rx="3.5" ry="1.2" fill="#f0d080" transform="rotate(-35 486 59)"/>
<rect x="935" y="19" width="3" height="1" fill="#222"/><rect x="942" y="16" width="4" height="4" fill="none" stroke="#222" stroke-width="0.8"/><path d="M950 17l3 3M953 17l-3 3" stroke="#222" stroke-width="0.9"/>
<rect x="912" y="5" width="4" height="1" fill="#223"/><rect x="924" y="2" width="4" height="4" fill="none" stroke="#223" stroke-width="0.8"/><path d="M943 3l3.5 3.5M946.5 3l-3.5 3.5" stroke="#fff" stroke-width="1"/>
<rect x="3" y="2" width="3" height="6" fill="#2a4a6a" opacity="0.6"/>
<rect x="6" y="13" width="6" height="7" fill="#fff" stroke="#6a7a8a" stroke-width="0.8"/><rect x="7" y="15" width="2" height="3" fill="#243"/>
<path d="M10 97v12M5 103h10M7 100h6M7 106h6" stroke="#3a6ad0" stroke-width="1.1"/>
<rect x="5" y="115" width="10" height="11" fill="#f8f8f8" stroke="#778" stroke-width="0.7"/><path d="M7 117q2 6 7 8" stroke="#444" stroke-width="0.9" fill="none"/>
<rect x="4" y="134" width="12" height="12" fill="#666"/><circle cx="7" cy="137" r="1.5" fill="#ddd"/><circle cx="13" cy="143" r="1.5" fill="#ddd"/><circle cx="13" cy="137" r="1" fill="#222"/><circle cx="7" cy="143" r="1.2" fill="#c08060"/>
<path d="M4 163l3-6h9l-3 6z" fill="#c8e8c8"/><path d="M6 163v3M9 163v3M12 163v3" stroke="#ccc" stroke-width="0.8"/>
<path d="M5 185l10-10" stroke="#d02020" stroke-width="3.2"/><path d="M11 179l4-4" stroke="#2a48c0" stroke-width="3.2"/>
<circle cx="10" cy="198" r="6" fill="#777"/><circle cx="10" cy="198" r="2.2" fill="#eee"/><path d="M14 193a6 6 0 0 1 2 7" stroke="#d04040" stroke-width="2" fill="none"/>
<rect x="4" y="211" width="12" height="12" fill="#d03050"/><rect x="5" y="212" width="5" height="5" fill="#3070d0"/><rect x="11" y="217" width="5" height="5" fill="#40a040"/><rect x="7" y="215" width="6" height="3" fill="#e0d040"/>
<path d="M4 229h12M4 241h12M7 229v4l3 2 3-2v-4M10 235v6" stroke="#333" stroke-width="0.9" fill="none"/><circle cx="12" cy="236" r="2.5" fill="#e8c820"/>
<path d="M4 248h12M4 260h12M7 248v4l3 2 3-2v-4M10 254v6" stroke="#333" stroke-width="0.9" fill="none"/><circle cx="12" cy="255" r="2.5" fill="#e8c820"/>
<rect x="1" y="264" width="20" height="18" fill="#cce4f7" stroke="#9ac4ea" stroke-width="0.7"/><rect x="4" y="267" width="13" height="11" fill="#3a8ad0"/><path d="M4 273q6-4 13 0v5h-13z" fill="#e8e040"/><path d="M6 270h8" stroke="#fff" stroke-width="1"/>
<path d="M6 286l3 2v6l-3 2 3 2M12 286l3 2v6l-3 2" stroke="#666" stroke-width="0.9" fill="none"/>
<path d="M4 304h12l-2 13h-8z" fill="#3ab0d8"/><path d="M7 312l5-5" stroke="#fff" stroke-width="1"/><rect x="5" y="304" width="10" height="3" fill="#fff" opacity="0.5"/>
<circle cx="5" cy="328" r="1.4" fill="#e8c820"/><circle cx="5" cy="347" r="1.6" fill="#d02020"/><circle cx="5" cy="366" r="1.6" fill="#1a2ab0"/>
<circle cx="10" cy="328" r="1.4" fill="#e8c820"/><circle cx="10" cy="347" r="1.6" fill="#d02020"/><circle cx="10" cy="366" r="1.6" fill="#1a2ab0"/>
<circle cx="15" cy="328" r="1.4" fill="#e8c820"/><circle cx="15" cy="347" r="1.6" fill="#d02020"/><circle cx="15" cy="366" r="1.6" fill="#1a2ab0"/>
<path d="M10 332l3 3-3 3-3-3z" fill="#d02020"/><circle cx="10" cy="354" r="2.5" fill="#1a2ab0"/><rect x="7.5" y="371" width="5" height="5" fill="#1a6a80"/>
<path d="M5 328v-2h10v2M5 347v-2h10v2M5 366v-2h10v2" stroke="#aaa" stroke-width="0.5" fill="none"/>
<path d="M24 76l-2 3h4z" fill="#2a4aa0"/><circle cx="24" cy="81" r="1" fill="#2a4aa0"/>
<path d="M930 77l2-2 2 2" stroke="#333" stroke-width="0.8" fill="none"/>
<text x="940" y="82" font-size="6.5" font-weight="bold" fill="#2030c0">P</text><path d="M945 79h5" stroke="#2030c0" stroke-width="1"/><text x="946" y="88" font-size="6" font-weight="bold" fill="#1a2a90">kV</text><text x="941" y="93" font-size="6" font-weight="bold" fill="#d02020">q</text><path d="M946 92h5" stroke="#d02020" stroke-width="1"/>
<circle cx="948" cy="100" r="5" fill="#ccc"/><path d="M945 97l6 6M951 97l-6 6" stroke="#fff" stroke-width="1.3"/>
<circle cx="942" cy="111" r="1" fill="#111"/><path d="M944 118l6-6 2 5z" fill="#e06010"/><path d="M943 118l3 1" stroke="#a04010" stroke-width="1.5"/>
<path d="M941 129l5-4" stroke="#222" stroke-width="1"/><path d="M944 134l6-7 2 6z" fill="#2060d0"/>
<rect x="941" y="143" width="10" height="8" fill="#fff" stroke="#555" stroke-width="0.8"/><rect x="944" y="146" width="10" height="8" fill="#eee" stroke="#555" stroke-width="0.8"/>
<path d="M942 171v-8M945 171v-5M948 171v-10M951 171v-6M954 171v-4" stroke="#bbb" stroke-width="1.6"/>
<rect x="941" y="176" width="12" height="11" fill="#3aa0c8"/><circle cx="947" cy="181" r="3" fill="#fff"/><circle cx="947" cy="181" r="1.5" fill="#3a8ac0"/>
<text x="940" y="201" font-size="6" font-weight="bold" fill="#d02020">Ubal</text><path d="M942 200l4 4 8-8" stroke="#2a4ad0" stroke-width="1.6" fill="none"/>
<text x="938.5" y="218" font-size="7.2" font-weight="bold" fill="#e02020">kvar</text><circle cx="941" cy="222" r="0.8" fill="#222"/>
<text x="943" y="238" font-size="11.5" font-weight="bold" fill="#1a2ad0">P</text><circle cx="940" cy="230" r="0.9" fill="#222"/>
<text x="940" y="255" font-size="11" font-weight="bold" fill="#1a2ad0">A</text><text x="948" y="255" font-size="8" font-weight="bold" fill="#1a2ad0">v</text><circle cx="940" cy="246" r="0.9" fill="#222"/>
<path d="M942 267l3 3 7-8" stroke="#aaa" stroke-width="1.5" fill="none"/><rect x="942" y="261" width="3" height="4" fill="none" stroke="#ccc" stroke-width="0.5"/>
<path d="M942 282l3 3 7-8" stroke="#aaa" stroke-width="1.5" fill="none"/><rect x="942" y="276" width="3" height="4" fill="none" stroke="#ccc" stroke-width="0.5"/>
<path d="M942 297l3 3 7-8" stroke="#aaa" stroke-width="1.5" fill="none"/><rect x="942" y="291" width="3" height="4" fill="none" stroke="#ccc" stroke-width="0.5"/>
<rect x="946" y="307" width="3" height="8" rx="1.5" fill="#8a9ab0" stroke="#555" stroke-width="0.5"/><circle cx="947.5" cy="318" r="0.8" fill="#333"/>
<rect x="929" y="153" width="6" height="10" fill="#ccc"/>
<rect x="919" y="69" width="18" height="1.5" fill="#999"/><rect x="939" y="70" width="15" height="0.8" fill="#ccc"/>
<path d="M38 561l2 3 2-3 2 3" stroke="#3050a0" stroke-width="0.9" fill="none"/><path d="M43 565l3-4" stroke="#d03030" stroke-width="0.8"/>
<path d="M2 25v11M2 38v10M2 51v15" stroke="#c8c8c8" stroke-width="1"/>
<path d="M40 26v10M65 26v10M92 26v10M127 26v10M197 26v10M222 26v10M283 26v10M308 26v10M349 26v10M364 26v10M654 26v10M313 38v10M458 38v10M129 51v15M170 51v15M308 51v15M485 26v0" stroke="#d4d4d4" stroke-width="0.8"/>
</svg>
<div id="inset" class="a"></div><svg class="a" style="left:0;top:0" width="1078" height="722" viewBox="0 0 1078 722"><defs><clipPath id="ic"><rect x="338" y="327" width="740" height="393"/></clipPath></defs><g clip-path="url(#ic)"><path d="M369 333 L433.6 356 L447 356 L452 350 L450 325" stroke="#b07a34" stroke-width="1.25" fill="none" stroke-linejoin="round"/>
<polygon points="359.5,329.0 369.4,327.3 366.0,336.7" fill="none" stroke="#30d030" stroke-width="1.4"/>
<text transform="translate(372.0,327.0) rotate(22.5)" y="2.2" font-family="Liberation Mono" font-size="6.8" font-weight="bold" fill="#dc9a9a" textLength="62.8" lengthAdjust="spacing">1.01kW+j0.001kvar</text>
<polygon points="387.1,339.2 394.4,338.5 392.3,344.4" fill="#e02020"/>
<polygon points="416.8,350.5 411.5,351.0 413.1,346.8" fill="#2a3ae0"/>
<path d="M383 404 L444 366.5 L460.6 361 L460 325" stroke="#b07a34" stroke-width="1.25" fill="none" stroke-linejoin="round"/>
<polygon points="374.6,409.9 379.6,401.2 384.6,409.9" fill="none" stroke="#30d030" stroke-width="1.4"/>
<text transform="translate(376.0,401.0) rotate(-31.2)" y="2.2" font-family="Liberation Mono" font-size="6.8" font-weight="bold" fill="#dc9a9a" textLength="71.3" lengthAdjust="spacing">1.01kW+j0.001kvar</text>
<polygon points="399.9,393.6 404.1,387.5 407.3,393.0" fill="#e02020"/>
<polygon points="426.6,376.5 423.6,380.8 421.3,377.0" fill="#2a3ae0"/>
<path d="M446.6 325 L458.2 413 L518 404.3 L557 397.6 L557 350 L611.4 340.5 L616 376" stroke="#2222cc" stroke-width="1.8" fill="none" stroke-linejoin="round"/>
<path d="M441.6 325 L454 421.4 L518 412 L564 405 L564 355 L606 345.5 L608 376" stroke="#2222cc" stroke-width="1.8" fill="none" stroke-linejoin="round"/>
<path d="M432.5 325 L450.7 429 L518 417.8 L569 410 L569 362 L587 358.8 L592.7 384" stroke="#2222cc" stroke-width="1.8" fill="none" stroke-linejoin="round"/>
<path d="M614 415 L606 419.6 L575.7 421 L575.7 369 L586 367 L588 380" stroke="#2222cc" stroke-width="1.6" fill="none" stroke-linejoin="round"/>
<path d="M540 419.7 L462 433 L470 470 L498 613 Q494 628 485.5 637 L336 676.4" stroke="#2222cc" stroke-width="1.8" fill="none" stroke-linejoin="round"/>
<path d="M518 423 L540 419.7 L572 416" stroke="#2222cc" stroke-width="1.8" fill="none" stroke-linejoin="round"/>
<path d="M518 427.5 L468 438 L477 470 L504 616.4 Q500 633 487.4 643 L336 683" stroke="#2222cc" stroke-width="1.8" fill="none" stroke-linejoin="round"/>
<path d="M518 427.5 L572 425 L603 424.6 L603 417" stroke="#2222cc" stroke-width="1.8" fill="none" stroke-linejoin="round"/>
<text transform="translate(437.0,327.0) rotate(77.0)" y="2.2" font-family="Liberation Mono" font-size="6.8" font-weight="bold" fill="#dc9a9a" textLength="40.0" lengthAdjust="spacing">95.78kW+j16.08kvar</text>
<polygon points="429.7,326.0 433.2,332.1 427.2,332.7" fill="#e02020"/>
<rect x="549.6" y="336.3" width="85" height="92.6" fill="none" stroke="#1a5a1a" stroke-width="1"/>
<path d="M621.4 414.8 L609.8 414.8 M621 413 L619 397" stroke="#2222cc" stroke-width="1.6" fill="none" stroke-linejoin="round"/>
<path d="M609.8 415 L639 588 L663 602 L855 583 L1078 580" stroke="#2222cc" stroke-width="1.8" fill="none" stroke-linejoin="round"/>
<path d="M614 415 L645 583 L663 596 L816 589.4 L816 620" stroke="#2222cc" stroke-width="1.8" fill="none" stroke-linejoin="round"/>
<path d="M877 620 L877 587.5 L1078 586" stroke="#2222cc" stroke-width="1.8" fill="none" stroke-linejoin="round"/>
<circle cx="587.3" cy="382.4" r="2.6" fill="#30e030"/>
<circle cx="592.3" cy="379.5" r="2.6" fill="#30e030"/>
<circle cx="598.1" cy="379.9" r="2.6" fill="#30e030"/>
<circle cx="594.8" cy="390.7" r="2.6" fill="#30e030"/>
<circle cx="605.6" cy="388.5" r="2.6" fill="#30e030"/>
<circle cx="616.4" cy="386.2" r="2.6" fill="#30e030"/>
<circle cx="614" cy="375.2" r="2.6" fill="#30e030"/>
<circle cx="623" cy="376.9" r="2.6" fill="#30e030"/>
<circle cx="629.7" cy="375.2" r="2.6" fill="#30e030"/>
<circle cx="596.5" cy="401.8" r="2.6" fill="#30e030"/>
<circle cx="619" cy="397.3" r="2.6" fill="#30e030"/>
<path d="M592 380 L594.8 390.7 L596.5 401.8 L600 416 M594.8 390.7 L616.4 386.2 L619 397.3 L620 413 M614 375.2 L616.4 386.2 L629.7 375.2" stroke="#2222cc" stroke-width="1.2" fill="none" stroke-linejoin="round"/>
<text x="600" y="388" font-family="Liberation Mono" font-size="6.5" font-weight="bold" fill="#dc9a9a">6.644kV</text><text x="630" y="386" font-family="Liberation Mono" font-size="6.5" font-weight="bold" fill="#dc9a9a">6.644kV</text>
<text x="605" y="410" font-family="Liberation Mono" font-size="6.5" font-weight="bold" fill="#dc9a9a">6.616kV</text><text x="632" y="407" font-family="Liberation Mono" font-size="6.5" font-weight="bold" fill="#dc9a9a">6.616kV</text>
<text transform="translate(552.0,343.0) rotate(84.7)" y="2.2" font-family="Liberation Mono" font-size="6.8" font-weight="bold" fill="#dc9a9a" textLength="87.4" lengthAdjust="spacing">153.02kW+j22.43kvar</text>
<polygon points="552.6,382.6 556.7,388.3 550.8,389.4" fill="#e02020"/>
<g transform="translate(574,358.3) rotate(-10)"><rect x="-4.5" y="-3" width="4.5" height="6" fill="none" stroke="#90e030" stroke-width="1"/><rect x="0" y="-3" width="4.5" height="6" fill="none" stroke="#90e030" stroke-width="1"/></g>
<g transform="translate(599.8,416.8) rotate(-10)"><rect x="-4.5" y="-3" width="4.5" height="6" fill="none" stroke="#90e030" stroke-width="1"/><rect x="0" y="-3" width="4.5" height="6" fill="none" stroke="#90e030" stroke-width="1"/></g>
<g transform="translate(521,406.5) rotate(-10)"><rect x="-4.5" y="-3" width="4.5" height="6" fill="none" stroke="#90e030" stroke-width="1"/><rect x="0" y="-3" width="4.5" height="6" fill="none" stroke="#90e030" stroke-width="1"/></g>
<g transform="translate(518,416) rotate(-10)"><rect x="-4.5" y="-3" width="4.5" height="6" fill="none" stroke="#90e030" stroke-width="1"/><rect x="0" y="-3" width="4.5" height="6" fill="none" stroke="#90e030" stroke-width="1"/></g>
<g transform="translate(517,426) rotate(-10)"><rect x="-4.5" y="-3" width="4.5" height="6" fill="none" stroke="#90e030" stroke-width="1"/><rect x="0" y="-3" width="4.5" height="6" fill="none" stroke="#90e030" stroke-width="1"/></g>
<text transform="translate(618.0,440.0) rotate(79.5)" y="2.2" font-family="Liberation Mono" font-size="6.8" font-weight="bold" fill="#dc9a9a" textLength="82.4" lengthAdjust="spacing">95.78kW+j16.08kvar</text>
<polygon points="618.3,483.1 616.3,476.0 622.5,477.1" fill="#e02020"/>
<polygon points="628.5,535.0 627.1,529.8 631.5,530.6" fill="#2a3ae0"/>
<path d="M505 492 L488.6 494 L513.6 620 L489.4 653.7 L336 699" stroke="#b07a34" stroke-width="1.25" fill="none" stroke-linejoin="round"/>
<circle cx="512.5" cy="496" r="3.6" fill="#f0b020"/><circle cx="507" cy="491" r="1.6" fill="#f0c040"/>
<path d="M517.0 496.0 L518.7 496.0" stroke="#f0b020" stroke-width="1"/>
<path d="M515.7 499.2 L516.9 500.4" stroke="#f0b020" stroke-width="1"/>
<path d="M512.5 500.5 L512.5 502.2" stroke="#f0b020" stroke-width="1"/>
<path d="M509.3 499.2 L508.1 500.4" stroke="#f0b020" stroke-width="1"/>
<path d="M508.0 496.0 L506.3 496.0" stroke="#f0b020" stroke-width="1"/>
<path d="M509.3 492.8 L508.1 491.6" stroke="#f0b020" stroke-width="1"/>
<path d="M512.5 491.5 L512.5 489.8" stroke="#f0b020" stroke-width="1"/>
<path d="M515.7 492.8 L516.9 491.6" stroke="#f0b020" stroke-width="1"/>
<text transform="translate(490.0,506.0) rotate(79.9)" y="2.2" font-family="Liberation Mono" font-size="6.8" font-weight="bold" fill="#dc9a9a" textLength="85.3" lengthAdjust="spacing">62.51kW+j0.594kvar</text>
<polygon points="490.0,551.9 488.2,545.1 494.1,546.2" fill="#e02020"/>
<path d="M456.5 558 L440 662.6 L336 696" stroke="#b07a34" stroke-width="1.25" fill="none" stroke-linejoin="round"/>
<polygon points="457.5,548.3 460.9,557.7 451.0,556.0" fill="none" stroke="#30d030" stroke-width="1.4"/>
<text transform="translate(452.0,545.0) rotate(101.8)" y="2.2" font-family="Liberation Mono" font-size="6.8" font-weight="bold" fill="#dc9a9a" textLength="73.5" lengthAdjust="spacing">1.01kW+j0.001kvar</text>
<polygon points="450.7,578.9 452.7,586.0 446.5,584.9" fill="#e02020"/>
<polygon points="444.5,605.0 445.9,610.2 441.5,609.4" fill="#2a3ae0"/>
<path d="M380 578 L434 659.6 L336 692" stroke="#b07a34" stroke-width="1.25" fill="none" stroke-linejoin="round"/>
<polygon points="374.6,570.0 383.3,575.0 374.6,580.0" fill="none" stroke="#30d030" stroke-width="1.4"/>
<text transform="translate(374.0,563.0) rotate(51.7)" y="2.2" font-family="Liberation Mono" font-size="6.8" font-weight="bold" fill="#dc9a9a" textLength="72.6" lengthAdjust="spacing">1.01kW+j0.001kvar</text>
<polygon points="391.6,593.6 398.0,597.3 392.9,600.9" fill="#e02020"/>
<polygon points="413.7,622.5 409.1,619.8 412.8,617.2" fill="#2a3ae0"/>
<text transform="translate(412.0,655.0) rotate(-18.0)" y="2.2" font-family="Liberation Mono" font-size="6.8" font-weight="bold" fill="#dc9a9a" textLength="90.4" lengthAdjust="spacing">504.61kW+j136.544kvar</text>
<polygon points="461.8,641.6 456.8,646.6 454.7,641.0" fill="#e02020"/>
<polygon points="483.8,641.0 480.1,644.7 478.5,640.5" fill="#2a3ae0"/>
<text transform="translate(397.0,674.0) rotate(-15.9)" y="2.2" font-family="Liberation Mono" font-size="6.8" font-weight="bold" fill="#dc9a9a" textLength="29.1" lengthAdjust="spacing">0.091kW</text>
<polygon points="407.6,676.6 412.8,671.4 414.9,677.3" fill="#e02020"/>
<polygon points="449.8,663.0 446.1,666.7 444.5,662.5" fill="#2a3ae0"/>
<path d="M656 516 L708.6 594.6 L709 608 L836 600 L836 605" stroke="#b07a34" stroke-width="1.25" fill="none" stroke-linejoin="round"/>
<polygon points="651.7,507.6 660.4,512.6 651.7,517.6" fill="none" stroke="#30d030" stroke-width="1.4"/>
<text transform="translate(653.0,501.0) rotate(56.5)" y="2.2" font-family="Liberation Mono" font-size="6.8" font-weight="bold" fill="#dc9a9a" textLength="74.3" lengthAdjust="spacing">1.01kW+j0.001kvar</text>
<polygon points="668.6,533.6 675.0,537.3 669.9,540.9" fill="#e02020"/>
<polygon points="685.7,561.5 681.1,558.8 684.8,556.2" fill="#2a3ae0"/>
<path d="M738 508 L716.6 592.5 L718 602 L845 596" stroke="#b07a34" stroke-width="1.25" fill="none" stroke-linejoin="round"/>
<polygon points="741.0,497.4 743.6,507.1 733.9,504.5" fill="none" stroke="#30d030" stroke-width="1.4"/>
<text transform="translate(737.0,491.0) rotate(104.0)" y="2.2" font-family="Liberation Mono" font-size="6.8" font-weight="bold" fill="#dc9a9a" textLength="74.2" lengthAdjust="spacing">1.021kW+j0.001kvar</text>
<polygon points="733.1,525.9 734.4,533.2 728.3,531.6" fill="#e02020"/>
<polygon points="725.2,556.9 724.3,551.7 728.6,552.8" fill="#2a3ae0"/>
<path d="M811 506 L843.3 583 L843.5 604 L847 609" stroke="#b07a34" stroke-width="1.25" fill="none" stroke-linejoin="round"/>
<polygon points="808.0,496.5 815.7,503.0 806.3,506.4" fill="none" stroke="#30d030" stroke-width="1.4"/>
<text transform="translate(804.0,476.0) rotate(68.1)" y="2.2" font-family="Liberation Mono" font-size="6.8" font-weight="bold" fill="#dc9a9a" textLength="77.6" lengthAdjust="spacing">1.021kW+j0.001kvar</text>
<polygon points="813.6,510.1 818.8,515.3 812.9,517.4" fill="#e02020"/>
<polygon points="820.0,527.8 816.3,524.1 820.5,522.5" fill="#2a3ae0"/>
<path d="M876 504 L853.7 583 L853 604 L849 609" stroke="#b07a34" stroke-width="1.25" fill="none" stroke-linejoin="round"/>
<polygon points="879.6,494.5 881.3,504.4 871.9,501.0" fill="none" stroke="#30d030" stroke-width="1.4"/>
<text transform="translate(881.0,476.0) rotate(106.5)" y="2.2" font-family="Liberation Mono" font-size="6.8" font-weight="bold" fill="#dc9a9a" textLength="74.0" lengthAdjust="spacing">1.021kW+j0.001kvar</text>
<polygon points="875.4,510.1 876.1,517.4 870.2,515.3" fill="#e02020"/>
<polygon points="870.0,526.8 869.5,521.5 873.7,523.1" fill="#2a3ae0"/>
<path d="M947 505 L976 582 L976.5 597.8 L1078 597.8" stroke="#b07a34" stroke-width="1.25" fill="none" stroke-linejoin="round"/>
<polygon points="942.8,493.5 950.5,500.0 941.1,503.4" fill="none" stroke="#30d030" stroke-width="1.4"/>
<text transform="translate(945.0,489.0) rotate(68.3)" y="2.2" font-family="Liberation Mono" font-size="6.8" font-weight="bold" fill="#dc9a9a" textLength="73.2" lengthAdjust="spacing">1.021kW+j0.001kvar</text>
<polygon points="951.6,520.1 956.8,525.3 950.9,527.4" fill="#e02020"/>
<polygon points="964.0,550.8 960.3,547.1 964.5,545.5" fill="#2a3ae0"/>
<path d="M1013 505 L981 582 L981 591.4 L1078 591.4" stroke="#b07a34" stroke-width="1.25" fill="none" stroke-linejoin="round"/>
<polygon points="1017.5,493.5 1019.2,503.4 1009.8,500.0" fill="none" stroke="#30d030" stroke-width="1.4"/>
<text transform="translate(1015.0,489.0) rotate(113.1)" y="2.2" font-family="Liberation Mono" font-size="6.8" font-weight="bold" fill="#dc9a9a" textLength="73.9" lengthAdjust="spacing">1.021kW+j0.001kvar</text>
<polygon points="1006.4,523.1 1007.1,530.4 1001.2,528.3" fill="#e02020"/>
<polygon points="994.0,550.8 993.5,545.5 997.7,547.1" fill="#2a3ae0"/>
<path d="M707 608 L838 600" stroke="#b07a34" stroke-width="1.25" fill="none" stroke-linejoin="round"/>
<path d="M887.7 715.7 L887.7 600.5 L1078 600.5" stroke="#2aa02a" stroke-width="1.4" fill="none" stroke-linejoin="round"/>
<text transform="translate(951.0,576.0) rotate(0.0)" y="2.2" font-family="Liberation Mono" font-size="6.8" font-weight="bold" fill="#dc9a9a" textLength="89.0" lengthAdjust="spacing">954.75kW+j193.509kvar</text>
<text transform="translate(879.0,582.5) rotate(0.0)" y="2.2" font-family="Liberation Mono" font-size="6.8" font-weight="bold" fill="#dc9a9a" textLength="79.0" lengthAdjust="spacing">53.33kW+j0.652kvar</text>
<text transform="translate(875.0,596.5) rotate(0.0)" y="2.2" font-family="Liberation Mono" font-size="6.8" font-weight="bold" fill="#e6cc3a" textLength="80.0" lengthAdjust="spacing">5.191kW+j0.039kvar</text>
<polygon points="992.0,581.0 998.4,578.0 998.4,584.0" fill="#e02020"/>
<polygon points="922.0,588.0 915.6,591.0 915.6,585.0" fill="#e02020"/>
<polygon points="918.0,601.0 911.6,604.0 911.6,598.0" fill="#e02020"/>
<polygon points="968.6,587.0 963.8,589.2 963.8,584.8" fill="#2a3ae0"/>
<polygon points="947.5,601.0 942.7,603.2 942.7,598.8" fill="#2a3ae0"/>
<polygon points="920.0,583.0 915.2,585.2 915.2,580.8" fill="#2a3ae0"/>
<path d="M816 620 L816 636 L845 636" stroke="#2222cc" stroke-width="1.8" fill="none" stroke-linejoin="round"/>
<path d="M877 620 L877 631 L861 631" stroke="#2222cc" stroke-width="1.8" fill="none" stroke-linejoin="round"/>
<path d="M825 629 L825 610.5 L886 610.5 M886 629 L836 629" stroke="#2aa02a" stroke-width="1.2" fill="none" stroke-linejoin="round"/>
<path d="M887.7 715.7 L896 716" stroke="#2aa02a" stroke-width="1.4" fill="none" stroke-linejoin="round"/>
<text transform="translate(822.0,597.0) rotate(45.0)" y="2.2" font-family="Liberation Mono" font-size="6.8" font-weight="bold" fill="#e6cc3a" textLength="87.7" lengthAdjust="spacing">LUMP1 0.099kW+j0.001kvar</text>
<text transform="translate(793.0,624.0) rotate(0.0)" y="2.2" font-family="Liberation Mono" font-size="6.8" font-weight="bold" fill="#e6cc3a" textLength="77.0" lengthAdjust="spacing">4.111kW+j0.001kvar</text>
<text transform="translate(855.0,619.0) rotate(0.0)" y="2.2" font-family="Liberation Mono" font-size="6.2" font-weight="bold" fill="#e6cc3a" textLength="29.0" lengthAdjust="spacing">0.099kV</text>
<text transform="translate(862.0,636.0) rotate(0.0)" y="2.2" font-family="Liberation Mono" font-size="6.2" font-weight="bold" fill="#e6cc3a" textLength="24.0" lengthAdjust="spacing">0.099kV</text>
<text transform="translate(891.0,605.0) rotate(90.0)" y="2.2" font-family="Liberation Mono" font-size="6.8" font-weight="bold" fill="#e6cc3a" textLength="70.0" lengthAdjust="spacing">5.391kW+j0.039kvar</text>
<path d="M842 626l11 9 M853 626l-11 9 M847.5 624v13 M841 630.5h13" stroke="#c040e0" stroke-width="1.6" fill="none"/>
<polygon points="855.0,633.5 858.0,638.8 852.0,638.8" fill="none" stroke="#30d030" stroke-width="1.4"/>
<polygon points="824.0,625.0 830.4,622.0 830.4,628.0" fill="#e02020"/>
<polygon points="886.0,641.5 883.4,635.9 888.6,635.9" fill="#e02020"/>
<polygon points="886.0,655.0 883.8,650.2 888.2,650.2" fill="#2a3ae0"/>
<circle cx="846" cy="611" r="2.5" fill="#30c030"/>
<circle cx="918.6" cy="705.9" r="4.2" fill="#f0b020"/><circle cx="914" cy="699" r="1.8" fill="#f0c040"/>
<path d="M923.6 705.9 L925.6 705.9" stroke="#f0b020" stroke-width="1"/>
<path d="M922.1 709.4 L923.5 710.8" stroke="#f0b020" stroke-width="1"/>
<path d="M918.6 710.9 L918.6 712.9" stroke="#f0b020" stroke-width="1"/>
<path d="M915.1 709.4 L913.7 710.8" stroke="#f0b020" stroke-width="1"/>
<path d="M913.6 705.9 L911.6 705.9" stroke="#f0b020" stroke-width="1"/>
<path d="M915.1 702.4 L913.7 701.0" stroke="#f0b020" stroke-width="1"/>
<path d="M918.6 700.9 L918.6 698.9" stroke="#f0b020" stroke-width="1"/>
<path d="M922.1 702.4 L923.5 701.0" stroke="#f0b020" stroke-width="1"/>
<text transform="translate(914.0,717.0) rotate(0.0)" y="2.2" font-family="Liberation Mono" font-size="6.2" font-weight="bold" fill="#e6cc3a" textLength="32.0" lengthAdjust="spacing">0.099kV</text>
<text transform="translate(902.0,712.0) rotate(-59.4)" y="2.2" font-family="Liberation Mono" font-size="6" font-weight="bold" fill="#dc9a9a" textLength="25.6" lengthAdjust="spacing">0.099kW</text>
<circle cx="906" cy="708" r="2" fill="#30a030"/><path d="M897 718l4-7 M900 718l4-7 M903 718l4-7 M906 718l4-7 M909 718l3-6" stroke="#b07a34" fill="none"/><path d="M906 708l5-4" stroke="#e02020" stroke-width="1.5"/></g></svg>
</body></html>
